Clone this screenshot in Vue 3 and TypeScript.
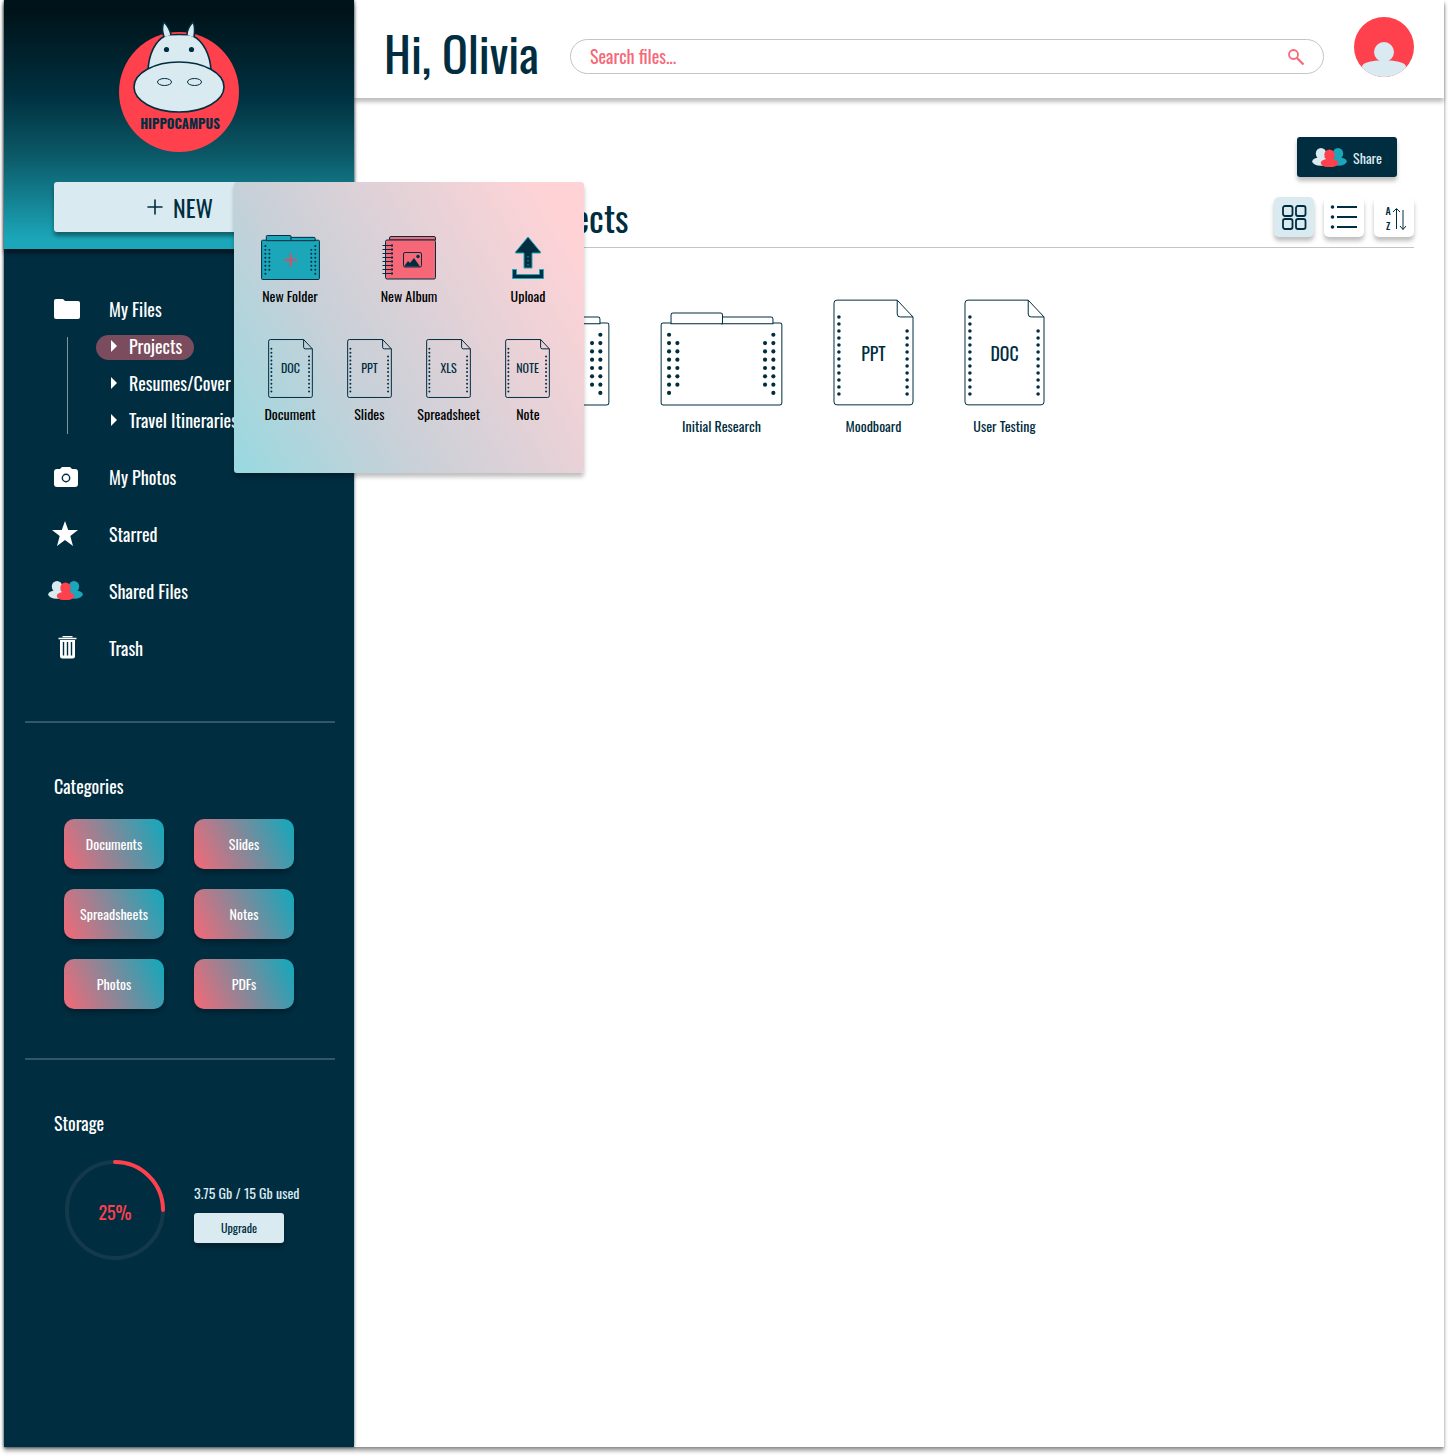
<script setup lang="ts">
import { computed, defineComponent, h, ref } from 'vue'

const navy = '#002d40'

function dots(x: number, y: number, count: number, step: number, r: number) {
  return Array.from({ length: count }, (_, i) =>
    h('circle', { cx: x, cy: y + i * step, r, fill: navy }),
  )
}

/* Sheet of paper with a folded corner and a type label */
const DocIcon = defineComponent({
  props: { label: { type: String, required: true }, small: Boolean },
  setup(props) {
    return () => {
      const line = { fill: 'none', stroke: navy, 'stroke-width': 1, 'vector-effect': 'non-scaling-stroke' }
      return h(
        'svg',
        { viewBox: '0 0 82 108', width: props.small ? 45 : 81, height: props.small ? 59 : 107, 'aria-hidden': 'true' },
        [
          h('path', { ...line, d: 'M4 1H65L81 18V104Q81 107 78 107H4Q1 107 1 104V4Q1 1 4 1Z' }),
          h('path', { ...line, d: 'M65 1V15Q65 18 68 18H81' }),
          ...dots(6, 18, 12, 7.1, 1.8),
          ...dots(75, 32.2, 10, 7.1, 1.8),
          h(
            'text',
            { x: 41, y: 63, 'text-anchor': 'middle', 'font-size': props.small ? 22 : 18, fill: navy },
            props.label,
          ),
        ],
      )
    }
  },
})

/* Folder with two tabs and punched edges */
const FolderIcon = defineComponent({
  props: { small: Boolean },
  setup(props) {
    return () => {
      const line = {
        fill: props.small ? '#1ba6b9' : '#fff',
        stroke: navy,
        'stroke-width': 1,
        'vector-effect': 'non-scaling-stroke',
      }
      return h(
        'svg',
        { viewBox: '0 0 124 95', width: props.small ? 59 : 123, height: props.small ? 45 : 94, 'aria-hidden': 'true' },
        [
          h('rect', { ...line, x: 1, y: 11, width: 122, height: 83, rx: 2 }),
          h('path', { ...line, d: 'M62 12V5H112Q114 5 114 7V12Z' }),
          h('path', { ...line, d: 'M11 12V3Q11 1 13 1H61Q63 1 63 3V12Z' }),
          ...dots(9, 23, 8, 8.4, 2.1),
          ...dots(17.4, 31.4, 6, 8.4, 2.1),
          ...dots(106, 31.4, 6, 8.4, 2.1),
          ...dots(114.4, 23, 8, 8.4, 2.1),
          props.small ? h('path', { d: 'M48 53H76M62 39V67', stroke: '#ff404d', 'stroke-width': 3.2 }) : null,
        ],
      )
    }
  },
})

/* Three overlapping people */
const PeopleIcon = defineComponent({
  setup() {
    return () => {
      const person = (x: number, y: number, fill: string) =>
        h('g', { fill }, [
          h('ellipse', { cx: x, cy: y, rx: 5.2, ry: 5.5 }),
          h('rect', { x: x - 3, y, width: 6, height: 8 }),
          h('ellipse', { cx: x, cy: y + 8, rx: 8.8, ry: 4.2 }),
        ])
      return h('svg', { viewBox: '0 0 35 19', width: 35, height: 19, 'aria-hidden': 'true' }, [
        person(9, 5.5, '#d9ebf1'),
        person(26, 5.5, '#1ba6b9'),
        person(17.5, 7, '#ff404d'),
      ])
    }
  },
})

const search = ref('')
const view = ref<'grid' | 'list'>('grid')
const folders = ['Projects', 'Resumes/Cover', 'Travel Itineraries']
const current = ref('Projects')
const categories = ['Documents', 'Slides', 'Spreadsheets', 'Notes', 'Photos', 'PDFs']
const newFiles = [
  { type: 'DOC', name: 'Document' },
  { type: 'PPT', name: 'Slides' },
  { type: 'XLS', name: 'Spreadsheet' },
  { type: 'NOTE', name: 'Note' },
]
const used = 3.75
const total = 15
const percent = computed(() => Math.round((used / total) * 100))
const ring = 2 * Math.PI * 48
</script>

<template>
  <div class="page">
    <div class="frame">
      <aside class="sidebar">
        <div class="hero">
          <svg class="logo" viewBox="0 0 120 132" width="120" height="132" role="img" aria-label="Hippocampus">
            <circle cx="60" cy="72" r="60" fill="#ff404d" />
            <g fill="#d9ebf1" stroke="#002d40" stroke-width="1.6">
              <path d="M29 50C30 34 36 21 46 16C50 14 70 14 74 16C84 21 91 34 92 50Z" />
              <path d="M45 17C43 11 43 6 45 2C49 6 51 10 52 15" />
              <path d="M68 15C68 10 71 5 74 2C76 6 76 11 75 17" />
              <ellipse cx="60" cy="67" rx="45" ry="25" />
              <ellipse cx="45.500" cy="62" rx="7" ry="3.500" stroke-width="1" />
              <ellipse cx="75.500" cy="62" rx="7" ry="3.500" stroke-width="1" />
            </g>
            <g fill="#002d40">
              <circle cx="47.500" cy="29.500" r="2.600" />
              <circle cx="72.500" cy="29.500" r="2.600" />
              <text x="61" y="109" text-anchor="middle" font-size="13" font-weight="700">HIPPOCAMPUS</text>
            </g>
          </svg>
          <button class="new" type="button" aria-haspopup="menu" aria-expanded="true">
            <svg viewBox="0 0 16 16" width="16" height="16" aria-hidden="true">
              <path d="M1 8H15M8 1V15" stroke="#002d40" stroke-width="1.600" stroke-linecap="round" />
            </svg>
            NEW
          </button>

          <div class="menu" role="menu">
            <div class="menu-row">
              <button class="menu-item" type="button" role="menuitem">
                <FolderIcon small />
                <span>New Folder</span>
              </button>
              <button class="menu-item" type="button" role="menuitem">
                <svg viewBox="0 0 54 45" width="54" height="45" aria-hidden="true">
                  <g fill="#f66877" stroke="#002d40">
                    <path d="M7.500 5V3Q7.500 1.500 9 1.500H52Q53.500 1.500 53.500 3V5Z" />
                    <rect x="3.500" y="5" width="50" height="39" rx="1.500" />
                    <rect x="21.500" y="17.500" width="18" height="14.500" rx="1.500" />
                    <path d="M.500 10.500H10M.500 14.500H10M.500 18.500H10M.500 22.500H10M.500 26.500H10M.500 30.500H10M.500 34.500H10M.500 38.500H10" />
                  </g>
                  <path d="M10 9.500V40" stroke="#002d40" stroke-width="2" stroke-dasharray="2 2" />
                  <path d="M22 31.500L26 26L28 28L32 23L38 31.500Z" fill="#002d40" />
                  <circle cx="36" cy="21.500" r="1.700" fill="#002d40" />
                </svg>
                <span>New Album</span>
              </button>
              <button class="menu-item" type="button" role="menuitem">
                <svg viewBox="0 0 34 45" width="34" height="45" aria-hidden="true">
                  <g fill="#002d40" stroke="#1ba6b9">
                    <path d="M17 2L29.500 17Q30 18 29 18H21V33H13V18H5Q4 18 4.500 17Z" />
                    <path d="M1.500 34.500H5.500V39.500H28.500V34.500H32.500V43.500H1.500Z" />
                  </g>
                  <path d="M17 21V31" stroke="#1ba6b9" stroke-dasharray="1.500 2.500" />
                </svg>
                <span>Upload</span>
              </button>
            </div>
            <div class="menu-row">
              <button v-for="f in newFiles" :key="f.type" class="menu-item" type="button" role="menuitem">
                <DocIcon :label="f.type" small />
                <span>{{ f.name }}</span>
              </button>
            </div>
          </div>
        </div>

        <nav class="nav">
          <a class="link link-files" href="#files">
            <span class="link-icon">
              <svg viewBox="0 0 26 20" width="26" height="20" aria-hidden="true">
                <path d="M2 0H9L11 2H24Q26 2 26 4V18Q26 20 24 20H2Q0 20 0 18V2Q0 0 2 0Z" fill="#fff" />
              </svg>
            </span>
            My Files
          </a>
          <ul class="tree">
            <li v-for="f in folders" :key="f">
              <a class="branch" :class="{ active: f === current }" href="#files" @click="current = f">
                <svg viewBox="0 0 6 12" width="6" height="12" aria-hidden="true"><path d="M0 0L6 6L0 12Z" fill="#fff" /></svg>
                {{ f }}
              </a>
            </li>
          </ul>
          <a class="link" href="#photos">
            <span class="link-icon">
              <svg viewBox="0 0 24 20" width="24" height="20" aria-hidden="true">
                <path d="M3 2H6L8 0H16L18 2H21Q24 2 24 5V17Q24 20 21 20H3Q0 20 0 17V5Q0 2 3 2Z" fill="#fff" />
                <circle cx="12" cy="11" r="3.700" fill="none" stroke="#002d40" stroke-width="1.400" />
              </svg>
            </span>
            My Photos
          </a>
          <a class="link" href="#starred">
            <span class="link-icon wide">
              <svg viewBox="0 0 26 25" width="26" height="25" aria-hidden="true">
                <path d="M13 0L16.200 9H26L18.300 14.900L21 25L13 19L5 25L7.700 14.900L0 9H9.800Z" fill="#fff" />
              </svg>
            </span>
            Starred
          </a>
          <a class="link" href="#shared">
            <span class="link-icon wide"><PeopleIcon /></span>
            Shared Files
          </a>
          <a class="link" href="#trash">
            <span class="link-icon">
              <svg viewBox="0 0 26 23" width="26" height="23" aria-hidden="true">
                <path d="M4.500 2.500H22.500M8.500 .700H18.500" stroke="#fff" stroke-width="1.300" />
                <path d="M6 4H21V20Q21 22.500 18.500 22.500H8.500Q6 22.500 6 20Z" fill="#fff" />
                <path d="M9.500 6V19.500M13.500 6V19.500M17.500 6V19.500" stroke="#002d40" stroke-width="1.400" />
              </svg>
            </span>
            Trash
          </a>
        </nav>

        <hr class="rule" />

        <section class="section">
          <h2>Categories</h2>
          <div class="categories">
            <button v-for="c in categories" :key="c" class="category" type="button">{{ c }}</button>
          </div>
        </section>

        <hr class="rule" />

        <section class="section">
          <h2>Storage</h2>
          <div class="storage">
            <svg viewBox="0 0 100 100" width="100" height="100" role="img" aria-label="Storage used">
              <circle cx="50" cy="50" r="48" fill="none" stroke="#14394b" stroke-width="4" />
              <circle
                cx="50"
                cy="50"
                r="48"
                fill="none"
                stroke="#ff404d"
                stroke-width="4"
                stroke-linecap="round"
                :stroke-dasharray="`${(ring * percent) / 100} ${ring}`"
                transform="rotate(-90 50 50)"
              />
              <text x="50" y="60" text-anchor="middle" font-size="18" fill="#ff404d">{{ percent }}%</text>
            </svg>
            <div class="quota">
              <span>{{ used }} Gb / {{ total }} Gb used</span>
              <button class="upgrade" type="button">Upgrade</button>
            </div>
          </div>
        </section>
      </aside>

      <div class="content">
        <header class="topbar">
          <h1>Hi, Olivia</h1>
          <form class="search" role="search" @submit.prevent>
            <input v-model="search" type="text" placeholder="Search files..." aria-label="Search files" />
            <button type="submit" aria-label="Search">
              <svg viewBox="0 0 16 16" width="16" height="16" aria-hidden="true">
                <circle cx="5.500" cy="5.500" r="4.500" fill="none" stroke="#f66877" stroke-width="1.800" />
                <path d="M9 9L15.500 15.500" stroke="#f66877" stroke-width="2.200" />
              </svg>
            </button>
          </form>
          <button class="avatar" type="button" aria-label="Account">
            <svg viewBox="0 0 60 60" width="60" height="60" aria-hidden="true">
              <clipPath id="disc"><circle cx="30" cy="30" r="30" /></clipPath>
              <g clip-path="url(#disc)">
                <rect width="60" height="60" fill="#ff404d" />
                <circle cx="30" cy="35" r="10" fill="#d9ebf1" />
                <path d="M8 50C8 46 16 44 24 43.500H36C44 44 52 46 52 50V60H8Z" fill="#d9ebf1" />
              </g>
            </svg>
          </button>
        </header>

        <main class="main">
          <button class="share" type="button"><PeopleIcon />Share</button>
          <div class="heading">
            <h2>Projects</h2>
            <div class="tools">
              <button class="tool" :class="{ on: view === 'grid' }" type="button" aria-label="Grid view" @click="view = 'grid'">
                <svg viewBox="0 0 26 26" width="26" height="26" fill="none" stroke="#002d40" stroke-width="1.800" aria-hidden="true">
                  <rect x="2" y="2" width="9.500" height="10" rx="2" />
                  <rect x="15" y="2" width="9.500" height="10" rx="2" />
                  <rect x="2" y="15" width="9.500" height="10" rx="2" />
                  <rect x="15" y="15" width="9.500" height="10" rx="2" />
                </svg>
              </button>
              <button class="tool" :class="{ on: view === 'list' }" type="button" aria-label="List view" @click="view = 'list'">
                <svg viewBox="0 0 28 26" width="28" height="26" aria-hidden="true">
                  <path d="M7 3H27M7 13H27M7 23H27" stroke="#002d40" stroke-width="1.800" />
                  <g fill="#002d40">
                    <circle cx="2.500" cy="3" r="1.800" />
                    <circle cx="2.500" cy="13" r="1.800" />
                    <circle cx="2.500" cy="23" r="1.800" />
                  </g>
                </svg>
              </button>
              <button class="tool" type="button" aria-label="Sort">
                <svg viewBox="0 0 24 34" width="24" height="34" aria-hidden="true">
                  <g font-size="10" font-weight="500" fill="#002d40" text-anchor="middle">
                    <text x="6" y="15">A</text>
                    <text x="6" y="30">Z</text>
                  </g>
                  <path d="M14.500 29V9M11 12L14.500 8.500L18 12M21 10V29.500M18 26L21 29.500L24 26" fill="none" stroke="#002d40" />
                </svg>
              </button>
            </div>
          </div>

          <ul class="files">
            <li><FolderIcon /></li>
            <li><FolderIcon /><span>Initial Research</span></li>
            <li><DocIcon label="PPT" /><span>Moodboard</span></li>
            <li><DocIcon label="DOC" /><span>User Testing</span></li>
          </ul>
        </main>
      </div>
    </div>
  </div>
</template>

<style>
body {
  background: #fff;
}
</style>

<style scoped>
.page {
  box-sizing: border-box;
  display: flex;
  min-height: 100vh;
  padding: 0 4px 9px;
  font-family: Oswald, 'Liberation Sans Narrow', 'Roboto Condensed', 'Open Sans Condensed', 'Liberation Sans', sans-serif;
  color: #002d40;
}

button,
input {
  box-sizing: border-box;
  border: 0;
  padding: 0;
  font: inherit;
  color: inherit;
  background: none;
}

button {
  cursor: pointer;
}

a {
  color: inherit;
  text-decoration: none;
}

ul {
  margin: 0;
  padding: 0;
  list-style: none;
}

h1,
h2 {
  margin: 0;
  font-weight: 400;
}

svg {
  display: block;
  flex: none;
}

.frame {
  flex: 1;
  display: flex;
  box-shadow: 0 4px 4px rgba(0, 0, 0, 0.35), 0 1px 2px rgba(0, 0, 0, 0.2);
}

.sidebar {
  position: relative;
  z-index: 2;
  flex: none;
  width: 350px;
  color: #fff;
  background: #002d40;
  box-shadow: 0 0 3px rgba(0, 30, 45, 0.7);
}

.hero {
  position: relative;
  z-index: 1;
  box-sizing: border-box;
  display: flex;
  flex-direction: column;
  align-items: center;
  gap: 30px;
  height: 249px;
  padding-top: 20px;
  background: linear-gradient(#00131a 5%, #00303f 38%, #0b5866 62%, #1ba6b9 96%);
  box-shadow: 0 4px 4px rgba(0, 0, 0, 0.5);
}

.new {
  display: flex;
  align-items: center;
  justify-content: center;
  gap: 10px;
  width: 250px;
  height: 50px;
  padding-left: 2px;
  border-radius: 3px;
  font-size: 24px;
  color: #002d40;
  background: #d9ebf1;
  box-shadow: 0 4px 4px rgba(0, 0, 0, 0.4);
}

.menu {
  position: absolute;
  top: 182px;
  left: 230px;
  box-sizing: border-box;
  display: flex;
  flex-direction: column;
  gap: 34px;
  width: 350px;
  height: 291px;
  padding: 53px 24px 0;
  border-radius: 3px;
  color: #000;
  background: linear-gradient(60deg, #98d9e0, #c9d0d8 35%, #ffd3d6 92%);
  box-shadow: 0 4px 4px rgba(0, 0, 0, 0.25);
}

.menu-row {
  display: flex;
  justify-content: space-between;
}

.menu-item {
  display: flex;
  flex-direction: column;
  align-items: center;
  gap: 7px;
  width: 64px;
  font-size: 14px;
  line-height: 18px;
  white-space: nowrap;
}

.nav {
  display: flex;
  flex-direction: column;
  padding: 43px 0 44px;
  font-size: 18px;
}

.link {
  box-sizing: border-box;
  display: flex;
  align-items: center;
  height: 57px;
  padding-bottom: 2px;
}

.link-files {
  height: 37px;
  padding-bottom: 3px;
}

.link-icon {
  box-sizing: border-box;
  display: flex;
  flex: none;
  width: 105px;
  padding-left: 50px;
}

.link-icon.wide {
  justify-content: center;
  width: 122px;
  margin-right: -17px;
  padding-left: 0;
}

.tree {
  position: relative;
  margin: 0 0 9px 63px;
}

.tree::before {
  content: '';
  position: absolute;
  top: 8px;
  bottom: 6px;
  left: 0;
  width: 1px;
  background: #7f969f;
}

.tree li {
  display: flex;
  align-items: center;
  height: 37px;
  padding-left: 29px;
}

.branch {
  box-sizing: border-box;
  display: flex;
  align-items: center;
  gap: 12px;
  height: 25px;
  padding: 0 12px 3px 15px;
  border-radius: 13px;
  white-space: nowrap;
}

.branch.active {
  background: #7b4c5e;
}

.rule {
  width: 310px;
  height: 2px;
  margin: 0 0 0 21px;
  border: 0;
  background: #33576a;
}

.section {
  padding: 50px 50px 49px;
}

.section h2 {
  font-size: 18px;
  line-height: 26px;
}

.categories {
  display: grid;
  grid-template-columns: 100px 100px;
  gap: 20px 30px;
  padding: 20px 10px 0;
}

.category {
  height: 50px;
  padding-bottom: 2px;
  border-radius: 10px;
  font-size: 14px;
  background: linear-gradient(65deg, #f66877, #1ba6b9 95%);
  box-shadow: 0 4px 4px rgba(0, 0, 0, 0.25);
}

.storage {
  display: flex;
  align-items: center;
  gap: 29px;
  padding: 24px 0 0 11px;
}

.quota {
  display: flex;
  flex-direction: column;
  gap: 10px;
  padding-top: 6px;
  font-size: 14px;
  line-height: 20px;
  color: #d9ebf1;
  white-space: nowrap;
}

.upgrade {
  width: 90px;
  height: 30px;
  border-radius: 3px;
  font-size: 12px;
  color: #002d40;
  background: #d9ebf1;
  box-shadow: 0 4px 4px rgba(0, 0, 0, 0.25);
}

.content {
  flex: 1;
  min-width: 0;
}

.topbar {
  box-sizing: border-box;
  display: flex;
  align-items: center;
  gap: 30px;
  height: 98px;
  padding: 0 30px 0 30px;
  box-shadow: 0 4px 4px rgba(0, 0, 0, 0.25);
}

.topbar h1 {
  flex: none;
  width: 156px;
  padding-top: 8px;
  font-size: 48px;
  line-height: 60px;
  white-space: nowrap;
}

.search {
  box-sizing: border-box;
  flex: 1;
  display: flex;
  align-items: center;
  height: 35px;
  margin-top: 15px;
  padding: 0 19px;
  border: 1px solid #c4c4c4;
  border-radius: 18px;
}

.search input {
  flex: 1;
  min-width: 0;
  height: 33px;
  padding-bottom: 2px;
  font-size: 18px;
  color: #f66877;
  outline: none;
}

.search input::placeholder {
  color: #f66877;
  opacity: 1;
}

.avatar {
  margin-bottom: 4px;
  border-radius: 50%;
}

.main {
  display: flex;
  flex-direction: column;
  padding: 39px 30px 0;
}

.share {
  display: flex;
  align-items: center;
  justify-content: center;
  gap: 6px;
  align-self: flex-end;
  width: 100px;
  height: 40px;
  margin-right: 17px;
  border-radius: 3px;
  font-size: 14px;
  color: #d9ebf1;
  background: #002d40;
  box-shadow: 0 4px 4px rgba(0, 0, 0, 0.25);
}

.heading {
  display: flex;
  justify-content: space-between;
  height: 50px;
  margin-top: 20px;
  border-bottom: 1px solid #c4c4c4;
}

.heading h2 {
  padding-left: 138px;
  font-size: 36px;
  line-height: 40px;
}

.tools {
  display: flex;
  gap: 10px;
}

.tool {
  display: flex;
  align-items: center;
  justify-content: center;
  width: 40px;
  height: 40px;
  border-radius: 5px;
  background: #fff;
  box-shadow: 0 4px 4px rgba(0, 0, 0, 0.25);
}

.tool.on {
  background: #d9ebf1;
}

.files {
  display: flex;
  gap: 50px;
  padding: 51px 0 0 103px;
}

.files li {
  display: grid;
  grid-template-rows: 107px 20px;
  row-gap: 10px;
  align-items: end;
  justify-items: center;
  font-size: 14px;
  line-height: 20px;
  white-space: nowrap;
}
</style>
